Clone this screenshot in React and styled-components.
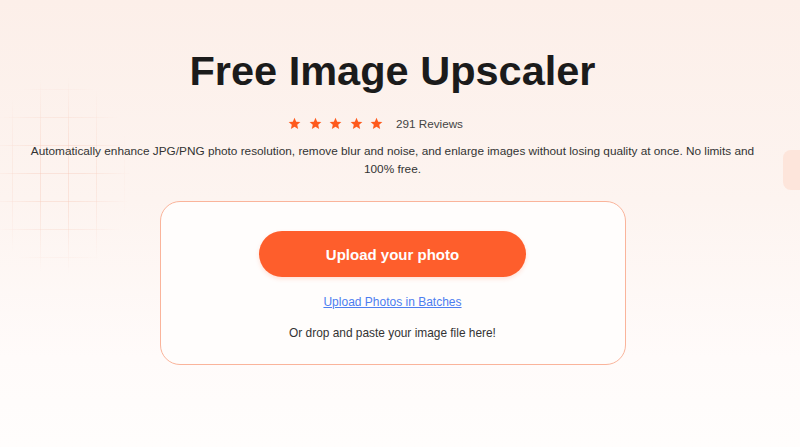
import React from 'react';
import styled, { createGlobalStyle } from 'styled-components';

const GlobalStyle = createGlobalStyle`
  html, body {
    margin: 0;
    padding: 0;
  }
  body {
    font-family: 'Liberation Sans', Arial, sans-serif;
    background: linear-gradient(180deg, #fcefe9 0%, #fdf4f0 45%, #fffbfa 80%, #fffdfc 100%);
    min-height: 447px;
    overflow: hidden;
  }
`;

function Star() {
  return (
    <svg width="13" height="13" viewBox="0 0 24 24">
      <polygon
        points="12,1.5 15.1,8.6 22.8,9.3 17,14.4 18.7,22 12,18 5.3,22 7,14.4 1.2,9.3 8.9,8.6"
        fill="#fe5a1d"
      />
    </svg>
  );
}

export default function App() {
  return (
    <>
      <GlobalStyle />
      <Page>
        <GridDecor />
        <SideTab />
        <Main>
          <Title>Free Image Upscaler</Title>
          <Rating>
            <Stars>
              {[0, 1, 2, 3, 4].map((i) => (
                <Star key={i} />
              ))}
            </Stars>
            <ReviewCount>291 Reviews</ReviewCount>
          </Rating>
          <Description>
            Automatically enhance JPG/PNG photo resolution, remove blur and noise, and enlarge
            images without losing quality at once. No limits and 100% free.
          </Description>
          <UploadCard>
            <UploadButton>Upload your photo</UploadButton>
            <BatchLink href="#">Upload Photos in Batches</BatchLink>
            <DropHint>Or drop and paste your image file here!</DropHint>
          </UploadCard>
        </Main>
      </Page>
    </>
  );
}

const Page = styled.div`
  position: relative;
  width: 800px;
  height: 447px;
  overflow: hidden;
`;

const GridDecor = styled.div`
  position: absolute;
  left: 0;
  top: 78px;
  width: 130px;
  height: 195px;
  background-image:
    linear-gradient(90deg, rgba(246, 190, 170, 0.3) 1px, transparent 1px),
    linear-gradient(0deg, rgba(246, 190, 170, 0.3) 1px, transparent 1px);
  background-size: 28px 28px;
  background-position: 12px 12px;
  -webkit-mask-image: radial-gradient(ellipse at 45% 50%, #000 25%, transparent 72%);
  mask-image: radial-gradient(ellipse at 45% 50%, #000 25%, transparent 72%);
`;

const SideTab = styled.div`
  position: absolute;
  right: -10px;
  top: 150px;
  width: 27px;
  height: 40px;
  border-radius: 8px;
  background: #fde5db;
`;

const Main = styled.main`
  position: relative;
  width: 785px;
  padding-top: 47px;
  display: flex;
  flex-direction: column;
  align-items: center;
  text-align: center;
`;

const Title = styled.h1`
  margin: 0;
  font-size: 41.5px;
  line-height: 48px;
  font-weight: 700;
  color: #1b1b1b;
`;

const Rating = styled.div`
  margin-top: 20px;
  margin-right: 34px;
  height: 16px;
  display: flex;
  align-items: center;
  gap: 13px;
`;

const Stars = styled.div`
  display: flex;
  align-items: center;
  gap: 7.5px;
`;

const ReviewCount = styled.span`
  font-size: 11.7px;
  color: #444;
`;

const Description = styled.p`
  margin: 11px 0 0;
  max-width: 755px;
  font-size: 11.8px;
  line-height: 18px;
  color: #333;
`;

const UploadCard = styled.section`
  box-sizing: border-box;
  margin-top: 23px;
  width: 466px;
  height: 164px;
  padding-top: 29px;
  border: 1.5px solid #fab49b;
  border-radius: 20px;
  background: #fffdfc;
  display: flex;
  flex-direction: column;
  align-items: center;
`;

const UploadButton = styled.button`
  width: 267px;
  height: 46px;
  border: none;
  border-radius: 23px;
  background: #fe5e2c;
  color: #fff;
  font-family: inherit;
  font-size: 15px;
  font-weight: 700;
  box-shadow: 0 2px 4px rgba(254, 94, 44, 0.18);
  cursor: pointer;
`;

const BatchLink = styled.a`
  margin-top: 18px;
  font-size: 12px;
  line-height: 14px;
  color: #4d7ef0;
  text-decoration: underline;
`;

const DropHint = styled.p`
  margin: 17px 0 0;
  font-size: 11.9px;
  line-height: 14px;
  color: #333;
`;
